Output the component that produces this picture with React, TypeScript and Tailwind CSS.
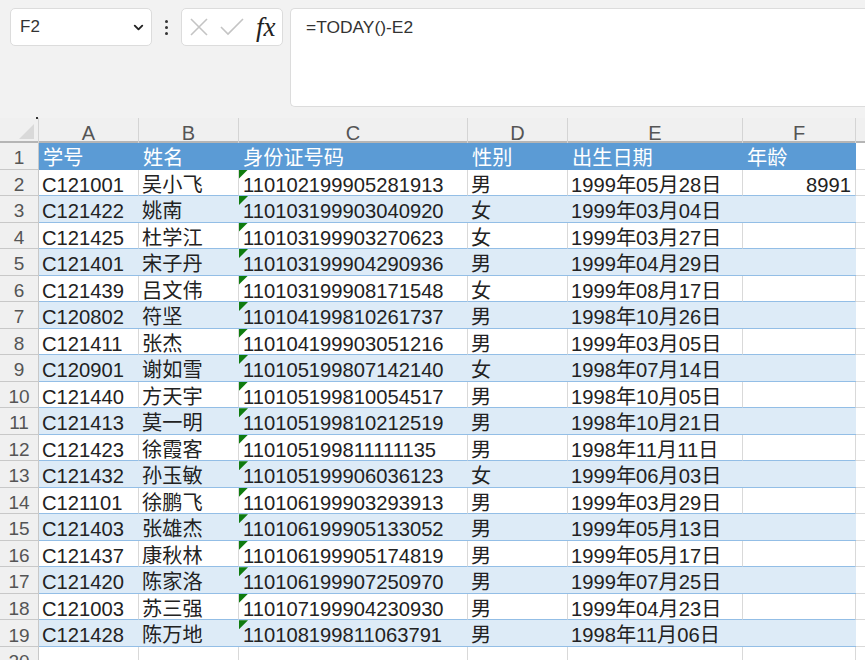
import { ChevronDown } from 'lucide-react';

const students = [
  ['C121001', '吴小飞', '110102199905281913', '男', '1999年05月28日', '8991'],
  ['C121422', '姚南', '110103199903040920', '女', '1999年03月04日', ''],
  ['C121425', '杜学江', '110103199903270623', '女', '1999年03月27日', ''],
  ['C121401', '宋子丹', '110103199904290936', '男', '1999年04月29日', ''],
  ['C121439', '吕文伟', '110103199908171548', '女', '1999年08月17日', ''],
  ['C120802', '符坚', '110104199810261737', '男', '1998年10月26日', ''],
  ['C121411', '张杰', '110104199903051216', '男', '1999年03月05日', ''],
  ['C120901', '谢如雪', '110105199807142140', '女', '1998年07月14日', ''],
  ['C121440', '方天宇', '110105199810054517', '男', '1998年10月05日', ''],
  ['C121413', '莫一明', '110105199810212519', '男', '1998年10月21日', ''],
  ['C121423', '徐霞客', '110105199811111135', '男', '1998年11月11日', ''],
  ['C121432', '孙玉敏', '110105199906036123', '女', '1999年06月03日', ''],
  ['C121101', '徐鹏飞', '110106199903293913', '男', '1999年03月29日', ''],
  ['C121403', '张雄杰', '110106199905133052', '男', '1999年05月13日', ''],
  ['C121437', '康秋林', '110106199905174819', '男', '1999年05月17日', ''],
  ['C121420', '陈家洛', '110106199907250970', '男', '1999年07月25日', ''],
  ['C121003', '苏三强', '110107199904230930', '男', '1999年04月23日', ''],
  ['C121428', '陈万地', '110108199811063791', '男', '1998年11月06日', ''],
];

const headers = ['学号', '姓名', '身份证号码', '性别', '出生日期', '年龄'];
const columns = ['A', 'B', 'C', 'D', 'E', 'F'];
const gridCols = 'grid grid-cols-[39px_100px_100px_229px_100px_175px_113px_9px] leading-none';

function RowHeader({ n }: { n: number }) {
  return (
    <div className="flex items-center justify-center border-r border-b border-[#c8c8c8] bg-[#f0f0f0] pt-[4px] text-[19px] text-[#555]">
      {n}
    </div>
  );
}

function DataRow({ row, n }: { row: string[]; n: number }) {
  const striped = n % 2 === 1;
  const cell = striped
    ? 'relative flex items-center overflow-hidden whitespace-nowrap border-b border-[#93bee6] bg-[#ddebf7] pt-[5px] text-[#222]'
    : 'relative flex items-center overflow-hidden whitespace-nowrap border-b border-r border-b-[#93bee6] border-r-[#d9d9d9] bg-white pt-[5px] text-[#222]';
  return (
    <div className={`${gridCols} h-[26.53px] text-[20.2px]`}>
      <RowHeader n={n} />
      {row.map((value, i) => (
        <div key={i} className={`${cell} ${i === 5 ? 'justify-end pr-[4px]' : i === 2 ? 'pl-[4px]' : 'pl-[3px]'}`}>
          {i === 2 && (
            <span className="absolute left-0 top-0 h-[9px] w-[9px] bg-[#0f7b0f] [clip-path:polygon(0_0,100%_0,0_100%)]" />
          )}
          {value}
        </div>
      ))}
      <div className="border-b border-[#d9d9d9] bg-white" />
    </div>
  );
}

export default function App() {
  return (
    <div className="h-[660px] w-[865px] overflow-hidden bg-white font-['Liberation_Sans','Noto_Sans_CJK_SC',sans-serif]">
      {/* formula bar */}
      <div className="flex h-[118px] items-start bg-[#f2f2f2] pl-[10px] pt-2">
        <div className="flex h-[38px] w-[142px] items-center justify-between rounded-[5px] border border-[#dcdcdc] bg-white pl-[9px] pr-[5px] text-[17px] text-[#333]">
          F2
          <ChevronDown className="h-[15px] w-[15px] text-[#222]" strokeWidth={3} />
        </div>
        <div className="flex h-[38px] w-[29px] flex-col items-center justify-center gap-[3px]">
          <span className="h-[3px] w-[3px] rounded-full bg-[#333]" />
          <span className="h-[3px] w-[3px] rounded-full bg-[#333]" />
          <span className="h-[3px] w-[3px] rounded-full bg-[#333]" />
        </div>
        <div className="flex h-[38px] w-[102px] items-center rounded-[5px] border border-[#dcdcdc] bg-white pl-[7px]">
          <svg width="20" height="20" viewBox="0 0 20 20" fill="none" stroke="#c4c4c4" strokeWidth="1.6">
            <path d="M2 2 L18 18 M18 2 L2 18" />
          </svg>
          <svg className="ml-[11px]" width="24" height="20" viewBox="0 0 24 20" fill="none" stroke="#c4c4c4" strokeWidth="1.6">
            <path d="M1 10 L8 17 L23 2" />
          </svg>
          <span className="ml-[12px] font-['Liberation_Serif',serif] text-[27px] italic leading-none text-[#222]">
            fx
          </span>
        </div>
        <div className="ml-[7px] h-[99px] flex-1 rounded-l-[5px] border border-r-0 border-[#dcdcdc] bg-white pl-[15px] pt-[5px] text-[17.4px] text-[#333]">
          =TODAY()-E2
        </div>
      </div>

      {/* column headers */}
      <div className={`${gridCols} h-[25px] border-b-2 border-[#b5b5b5] bg-[#f0f0f0] text-[20px] text-[#555]`}>
        <div className="relative flex items-end justify-end border-r border-[#d4d4d4] pb-[4px] pr-[4px]">
          <span className="absolute -top-px right-0 h-[2px] w-[2px] bg-[#333]" />
          <span className="h-[15px] w-[15px] bg-[#d9d9d9] [clip-path:polygon(100%_0,100%_100%,0_100%)]" />
        </div>
        {columns.map((c) => (
          <div key={c} className="flex items-center justify-center border-r border-[#d4d4d4] pt-[5px]">
            {c}
          </div>
        ))}
        <div />
      </div>

      {/* sheet */}
      <div className={`${gridCols} h-[26.5px] text-[20.2px]`}>
        <RowHeader n={1} />
        {headers.map((h) => (
          <div key={h} className="flex items-center whitespace-nowrap bg-[#5b9bd5] pl-[4px] pt-[3px] text-white">
            {h}
          </div>
        ))}
        <div className="border-b border-[#d9d9d9] bg-white" />
      </div>
      {students.map((row, i) => (
        <DataRow key={row[0]} row={row} n={i + 2} />
      ))}
      <div className={`${gridCols} h-[26.5px] text-[20px]`}>
        <RowHeader n={20} />
        {columns.map((c) => (
          <div key={c} className="border-r border-[#d9d9d9] bg-white" />
        ))}
        <div />
      </div>
    </div>
  );
}
